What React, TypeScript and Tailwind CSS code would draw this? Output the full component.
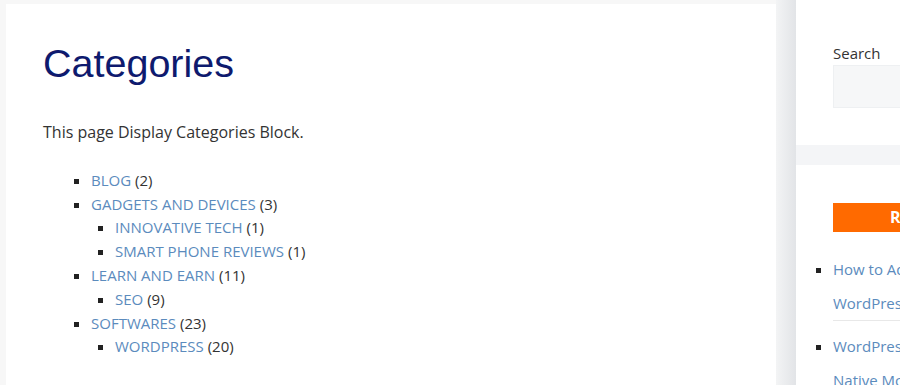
const categorias = [
  { nombre: "BLOG", total: 2, hijos: [] },
  {
    nombre: "GADGETS AND DEVICES",
    total: 3,
    hijos: [
      { nombre: "INNOVATIVE TECH", total: 1 },
      { nombre: "SMART PHONE REVIEWS", total: 1 },
    ],
  },
  { nombre: "LEARN AND EARN", total: 11, hijos: [{ nombre: "SEO", total: 9 }] },
  { nombre: "SOFTWARES", total: 23, hijos: [{ nombre: "WORDPRESS", total: 20 }] },
];

const sans = "font-['Open_Sans',_'Liberation_Sans',_sans-serif]";

export default function App() {
  return (
    <div
      className={`w-[900px] h-[385px] overflow-hidden bg-[#f7f7f7] flex ${sans}`}
    >
      {/* contenido principal */}
      <main className="ml-[6px] mt-[4px] w-[770px] shrink-0 bg-white pl-[37px] pt-[36px]">
        <h1 className="font-['Liberation_Sans',_Arial,_sans-serif] text-[39.5px] leading-[1.2] text-[#0e1a6e]">
          Categories
        </h1>
        <p className="mt-[33px] text-[16px] leading-[24px] text-[#333]">
          This page Display Categories Block.
        </p>
        <ul className="mt-[24.5px] pl-[48px] list-[square] marker:text-[#222] text-[15px] leading-[23.8px] text-[#333]">
          {categorias.map((c) => (
            <li key={c.nombre}>
              <a href="#" className="text-[#5b8bbd]">
                {c.nombre}
              </a>{" "}
              ({c.total})
              {c.hijos.length > 0 && (
                <ul className="pl-[24px] list-[square]">
                  {c.hijos.map((h) => (
                    <li key={h.nombre}>
                      <a href="#" className="text-[#5b8bbd]">
                        {h.nombre}
                      </a>{" "}
                      ({h.total})
                    </li>
                  ))}
                </ul>
              )}
            </li>
          ))}
        </ul>
      </main>

      {/* sombra del sidebar */}
      <div className="w-[20px] shrink-0 bg-gradient-to-r from-[#f3f4f5] to-[#e2e4e7]" />

      {/* sidebar */}
      <aside className="w-[318px] shrink-0 flex flex-col">
        <div className="shrink-0 bg-white h-[145px] px-[37px] pt-[41px]">
          <label className="block text-[15px] leading-[24px] text-[#333]">
            Search
          </label>
          <input
            type="text"
            className="block w-full h-[43px] bg-[#f6f7f8] border border-[#eef0f2] outline-none"
          />
        </div>
        <div className="shrink-0 h-[20px] bg-[#f4f5f7]" />
        <div className="shrink-0 bg-white flex-1 px-[37px] pt-[38px]">
          <h2 className="h-[29px] bg-[#ff6a00] pl-[57px] text-[16px] leading-[29px] font-bold text-white whitespace-nowrap">
            Recent Posts
          </h2>
          <ul className="mt-[20px] list-[square] marker:text-[#222] text-[15px] leading-[34px] text-[#5b8bbd] whitespace-nowrap">
            <li className="border-b border-[#e8e8e8]">
              <a href="#">
                How to Add Google Fonts in
                <br />
                WordPress Themes
              </a>
            </li>
            <li className="pt-[8px]">
              <a href="#">
                WordPress Plugin to Build
                <br />
                Native Mobile Apps
              </a>
            </li>
          </ul>
        </div>
      </aside>
    </div>
  );
}
